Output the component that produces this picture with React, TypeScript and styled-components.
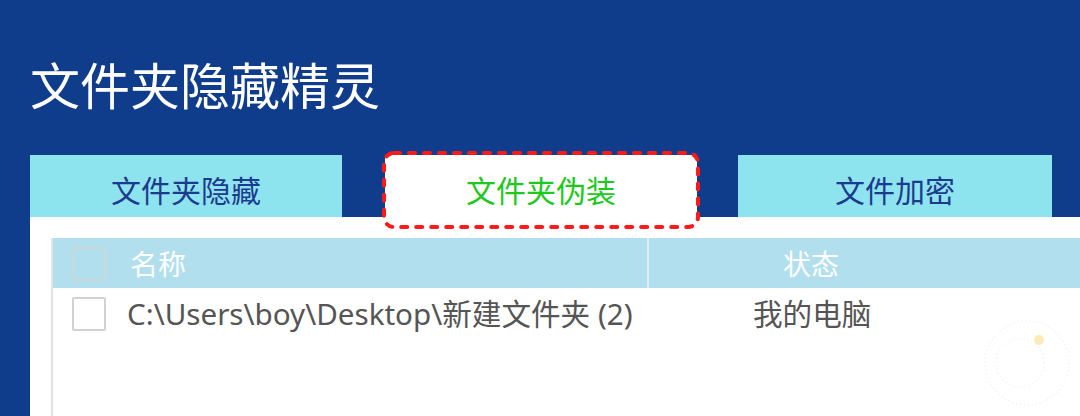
import React from "react";
import styled, { createGlobalStyle } from "styled-components";

const GlobalStyle = createGlobalStyle`
  html, body {
    margin: 0;
    padding: 0;
    overflow: hidden;
  }
`;

const cjk = `"Noto Sans", "Noto Sans CJK SC", sans-serif`;

const Window = styled.div`
  position: relative;
  width: 1080px;
  height: 416px;
  background: #0f3c8b;
  display: flex;
  flex-direction: column;
  font-family: ${cjk};
  overflow: hidden;
`;

const Title = styled.h1`
  margin: 0;
  padding: 50px 0 0 30px;
  height: 155px;
  box-sizing: border-box;
  flex-shrink: 0;
  font-size: 50px;
  font-weight: 400;
  line-height: 72px;
  color: #ffffff;
`;

const TabBar = styled.div`
  display: flex;
  align-items: flex-end;
  padding-left: 30px;
  height: 62px;
  flex-shrink: 0;
`;

const Tab = styled.div<{ $active?: boolean; $width: number; $gap: number }>`
  position: relative;
  width: ${(p) => p.$width}px;
  height: 62px;
  margin-right: ${(p) => p.$gap}px;
  background: ${(p) => (p.$active ? "#ffffff" : "#8ee4ee")};
  color: ${(p) => (p.$active ? "#1ec81e" : "#1c3b8e")};
  font-size: 30px;
  display: flex;
  align-items: center;
  justify-content: center;
  padding-top: 6px;
  box-sizing: border-box;
`;

const DashedMark = styled.svg`
  position: absolute;
  left: -3px;
  top: -4px;
  width: 318px;
  height: 78px;
  overflow: visible;
  pointer-events: none;
`;

const Panel = styled.div`
  flex: 1;
  margin-left: 30px;
  background: #ffffff;
  padding: 21px 0 0 21px;
`;

const Table = styled.div`
  border-left: 2px solid #e3e3e3;
  height: 100%;
`;

const HeaderRow = styled.div`
  display: flex;
  height: 50px;
  background: #b1dfee;
  color: #ffffff;
  font-size: 28px;
`;

const Row = styled.div`
  display: flex;
  height: 50px;
  color: #555555;
  font-size: 29.6px;
`;

const NameCell = styled.div`
  width: 594px;
  display: flex;
  align-items: center;
  padding-left: 19px;
  padding-top: 2px;
  box-sizing: border-box;
`;

const StateCell = styled.div<{ $head?: boolean; $pad: number }>`
  flex: 1;
  display: flex;
  align-items: center;
  padding-left: ${(p) => p.$pad}px;
  padding-top: 2px;
  border-left: ${(p) => (p.$head ? "2px solid #dceef4" : "2px solid transparent")};
`;

const Check = styled.span<{ $head?: boolean }>`
  width: 30px;
  height: 30px;
  border: 2px solid ${(p) => (p.$head ? "#cfd6da" : "#d2d2d2")};
  border-radius: 2px;
  background: ${(p) => (p.$head ? "transparent" : "#ffffff")};
  margin-right: ${(p) => (p.$head ? 24 : 21)}px;
  flex-shrink: 0;
`;

const Label = styled.span`
  white-space: nowrap;
  line-height: 1;
`;

const Watermark = styled.svg`
  position: absolute;
  right: 8px;
  bottom: 8px;
  width: 90px;
  height: 90px;
  pointer-events: none;
`;

export default function App() {
  return (
    <>
      <GlobalStyle />
      <Window>
        <Title>文件夹隐藏精灵</Title>
        <TabBar>
          <Tab $width={312} $gap={43}>
            文件夹隐藏
          </Tab>
          <Tab $width={312} $gap={41} $active>
            文件夹伪装
            <DashedMark viewBox="0 0 318 78">
              <rect
                x="2"
                y="2"
                width="314"
                height="74"
                rx="10"
                fill="none"
                stroke="#ff1a1a"
                strokeWidth="4"
                strokeDasharray="6 9"
                strokeLinecap="round"
              />
            </DashedMark>
          </Tab>
          <Tab $width={314} $gap={0}>
            文件加密
          </Tab>
        </TabBar>
        <Panel>
          <Table>
            <HeaderRow>
              <NameCell>
                <Check $head />
                <Label>名称</Label>
              </NameCell>
              <StateCell $head $pad={134}>
                <Label>状态</Label>
              </StateCell>
            </HeaderRow>
            <Row>
              <NameCell>
                <Check />
                <Label>C:\Users\boy\Desktop\新建文件夹 (2)</Label>
              </NameCell>
              <StateCell $pad={104}>
                <Label>我的电脑</Label>
              </StateCell>
            </Row>
          </Table>
        </Panel>
        <Watermark viewBox="0 0 90 90">
          <circle cx="45" cy="45" r="42" fill="none" stroke="#f0f0f0" strokeWidth="1.5" strokeDasharray="1 3" />
          <circle cx="38" cy="45" r="24" fill="none" stroke="#f2f2f2" strokeWidth="1.5" strokeDasharray="1 3" />
          <circle cx="57" cy="22" r="5" fill="#fdeab8" />
        </Watermark>
      </Window>
    </>
  );
}
